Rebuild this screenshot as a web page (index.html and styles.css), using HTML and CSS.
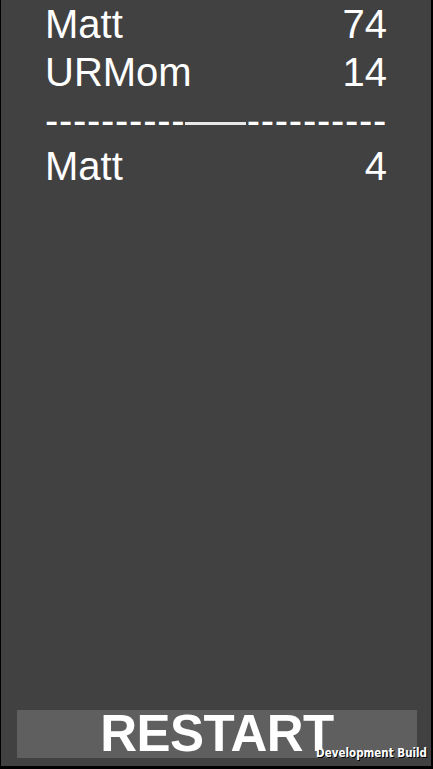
FILE: index.html
```html
<!DOCTYPE html>
<html>
<head>
<meta charset="utf-8">
<link rel="stylesheet" href="styles.css">
</head>
<body>
<div class="frame">
  <div class="scores">
    <div class="row"><span>Matt</span><span>74</span></div>
    <div class="row"><span>URMom</span><span>14</span></div>
    <div class="row divider">
      <span class="dashes">----------</span>
      <span class="solid"></span>
      <span class="dashes">----------</span>
    </div>
    <div class="row"><span>Matt</span><span>4</span></div>
  </div>
  <div class="spacer"></div>
  <div class="button-row">
    <div class="restart">RESTART</div>
  </div>
  <div class="devbuild">Development Build</div>
</div>
</body>
</html>
```

FILE: styles.css
```css
html, body {
  margin: 0;
  padding: 0;
  background: #000;
}
body {
  width: 433px;
  height: 769px;
  overflow: hidden;
}
.frame {
  position: relative;
  margin-left: 1px;
  width: 430px;
  height: 766px;
  background: #414141;
  display: flex;
  flex-direction: column;
  font-family: "Liberation Sans", Arial, sans-serif;
  color: #ffffff;
}
.scores {
  margin-top: 0;
  padding-left: 44px;
  width: 342px;
}
.row {
  display: flex;
  justify-content: space-between;
  font-size: 40px;
  line-height: 48px;
  height: 48px;
}
.divider {
  justify-content: flex-start;
  align-items: flex-start;
  height: 46px;
}
.dashes {
  letter-spacing: 0.7px;
  white-space: nowrap;
}
.solid {
  display: block;
  width: 61px;
  height: 3px;
  margin-top: 26px;
  margin-right: 1px;
  background: #e8e8e8;
}
.spacer {
  flex: 1;
}
.button-row {
  padding: 0 14px 8px 16px;
}
.restart {
  height: 48px;
  background: #5f5f5f;
  text-align: center;
  font-weight: bold;
  font-size: 51px;
  line-height: 48px;
  letter-spacing: -0.5px;
  overflow: visible;
}
.devbuild {
  position: absolute;
  right: 4px;
  bottom: 6px;
  font-family: "DejaVu Sans Condensed", "DejaVu Sans", sans-serif;
  font-weight: bold;
  font-size: 11.5px;
  line-height: 14px;
  color: #ffffff;
  text-shadow: 1px 1px 0 #000;
}
```
